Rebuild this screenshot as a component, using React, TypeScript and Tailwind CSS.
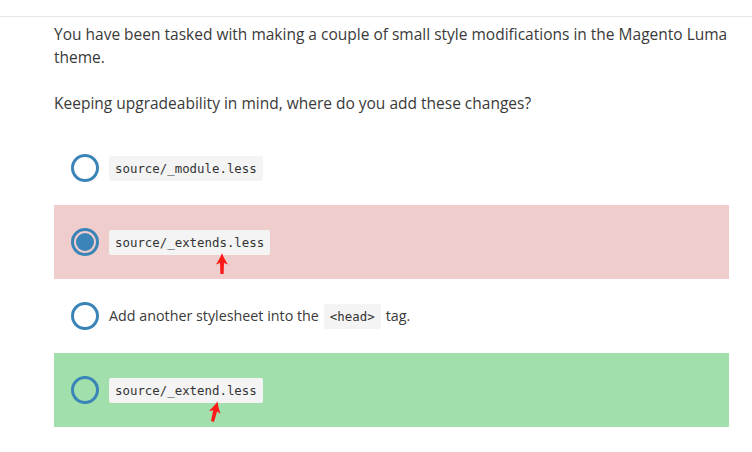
import React from "react";

function Radio({ checked }: { checked?: boolean }) {
  return (
    <div className="w-7 h-7 shrink-0 rounded-full border-[3px] border-[#3a84b7] flex items-center justify-center">
      {checked && <div className="w-[18px] h-[18px] rounded-full bg-[#3a84b7]" />}
    </div>
  );
}

function Code({ children }: { children: React.ReactNode }) {
  return (
    <span className="inline-block bg-[#f4f4f4] rounded-[2px] px-[6px] h-[25px] leading-[25px] text-[12.4px] text-[#333] font-['DejaVu_Sans_Mono','Liberation_Mono',monospace]">
      {children}
    </span>
  );
}

function Arrow({ className }: { className: string }) {
  return (
    <svg className={className} width="12" height="21" viewBox="0 0 12 21">
      <path d="M6 0 C7 3 9 7 12 11.5 L8 10 L7.6 21 L4.4 21 L4 10 L0 11.5 C3 7 5 3 6 0 Z" fill="#ff1a1a" />
    </svg>
  );
}

export default function App() {
  return (
    <div className="relative w-[752px] h-[452px] bg-white text-[#3a3a3a] font-['Open_Sans',Arial,sans-serif] overflow-hidden">
      <div className="h-4" />
      <div className="border-t border-[#e6e6e6]" />
      <div className="ml-[54px] w-[675px] pt-[6px]">
        <p className="text-[15.5px] leading-[23px]">
          You have been tasked with making a couple of small style modifications in the Magento Luma theme.
        </p>
        <p className="text-[15.5px] leading-[23px] mt-[23px]">
          Keeping upgradeability in mind, where do you add these changes?
        </p>
        <div className="mt-[16px] flex flex-col">
          <div className="h-[74px] flex items-center gap-[10px] pl-[17px]">
            <Radio />
            <Code>source/_module.less</Code>
          </div>
          <div className="h-[74px] flex items-center gap-[10px] pl-[17px] bg-[#f0cdcd]">
            <Radio checked />
            <Code>source/_extends.less</Code>
          </div>
          <div className="h-[74px] flex items-center gap-[10px] pl-[17px] text-[14.3px]">
            <Radio />
            <span className="flex items-center gap-[5px]">
              <span>Add another stylesheet into the</span>
              <Code>&lt;head&gt;</Code>
              <span>tag.</span>
            </span>
          </div>
          <div className="h-[74px] flex items-center gap-[10px] pl-[17px] bg-[#a1e0ad]">
            <Radio />
            <Code>source/_extend.less</Code>
          </div>
        </div>
      </div>
      <Arrow className="absolute left-[216px] top-[253px]" />
      <Arrow className="absolute left-[209px] top-[401px] rotate-[14deg]" />
    </div>
  );
}
